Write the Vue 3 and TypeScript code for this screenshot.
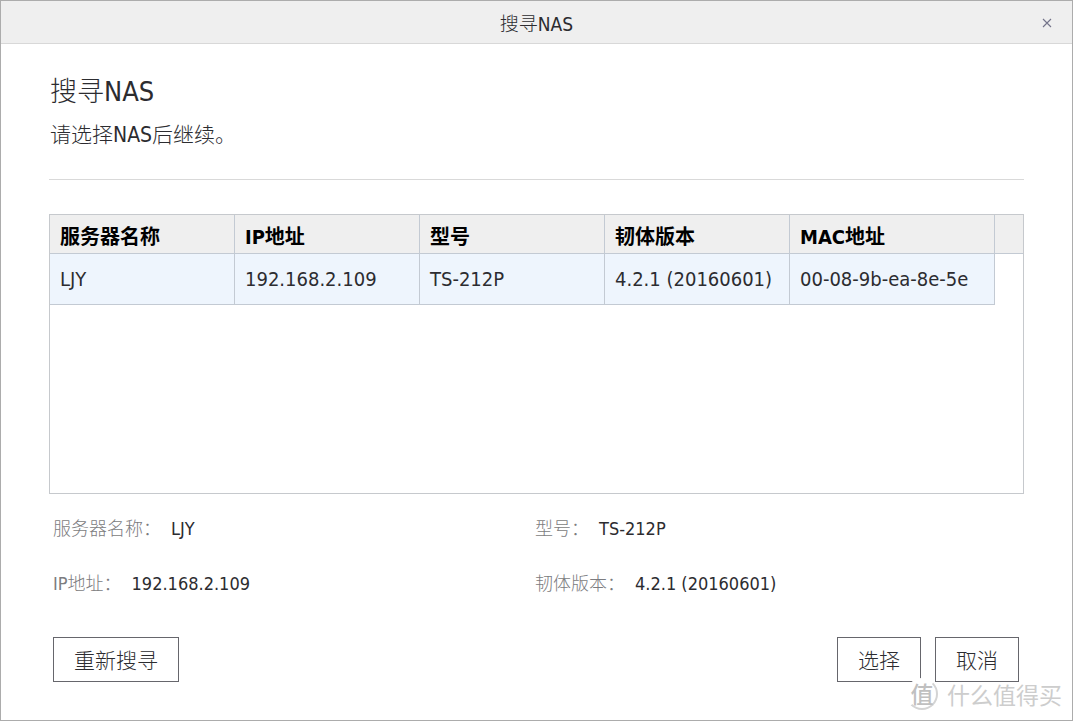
<script setup lang="ts">
import { ref } from 'vue'

interface NasServer {
  name: string
  ip: string
  model: string
  firmware: string
  mac: string
}

const columns: string[] = ['服务器名称', 'IP地址', '型号', '韧体版本', 'MAC地址']
const servers: NasServer[] = [
  { name: 'LJY', ip: '192.168.2.109', model: 'TS-212P', firmware: '4.2.1 (20160601)', mac: '00-08-9b-ea-8e-5e' },
]
const selected = ref<NasServer>(servers[0])
</script>

<template>
  <main class="dialog">
    <header class="titlebar">
      <span class="titlebar-text">搜寻NAS</span>
      <button class="close" type="button" aria-label="关闭">
        <svg viewBox="0 0 10 10" width="10" height="10" aria-hidden="true">
          <path d="M1 1L9 9M9 1L1 9" fill="none" stroke="#74748a" stroke-width="1.1" />
        </svg>
      </button>
    </header>

    <div class="content">
      <section class="intro">
        <h1>搜寻NAS</h1>
        <p>请选择NAS后继续。</p>
      </section>

      <div class="list">
        <table>
          <colgroup>
            <col v-for="i in 4" :key="i" class="col" />
            <col class="col-mac" />
            <col />
          </colgroup>
          <thead>
            <tr>
              <th v-for="c in columns" :key="c" scope="col">{{ c }}</th>
              <td class="filler"></td>
            </tr>
          </thead>
          <tbody>
            <tr v-for="s in servers" :key="s.mac" @click="selected = s">
              <td>{{ s.name }}</td>
              <td>{{ s.ip }}</td>
              <td>{{ s.model }}</td>
              <td>{{ s.firmware }}</td>
              <td>{{ s.mac }}</td>
              <td class="blank"></td>
            </tr>
          </tbody>
        </table>
      </div>

      <dl class="details">
        <div><dt>服务器名称：</dt><dd>{{ selected.name }}</dd></div>
        <div><dt>型号：</dt><dd>{{ selected.model }}</dd></div>
        <div><dt>IP地址：</dt><dd>{{ selected.ip }}</dd></div>
        <div><dt>韧体版本：</dt><dd>{{ selected.firmware }}</dd></div>
      </dl>

      <footer class="actions">
        <button class="btn rescan" type="button">重新搜寻</button>
        <button class="btn" type="button">选择</button>
        <button class="btn" type="button">取消</button>
      </footer>
    </div>

    <div class="watermark">
      <span class="seal">值</span>
      <span>什么值得买</span>
    </div>
  </main>
</template>

<style>
body {
  margin: 0;
}
</style>

<style scoped>
.dialog {
  position: relative;
  box-sizing: border-box;
  min-height: 100vh;
  display: flex;
  flex-direction: column;
  border: 1px solid #acacac;
  background: #fff;
  color: #2c2c30;
  font-family: "DejaVu Sans Condensed", "Noto Sans", "Noto Sans CJK SC", sans-serif;
  font-size: 20px;
  font-weight: 300;
}

.titlebar {
  display: grid;
  grid-template-columns: 50px 1fr 50px;
  align-items: center;
  height: 42px;
  border-bottom: 1px solid #d8d8d8;
  background: #efefef;
  font-size: 19px;
}

.titlebar-text {
  grid-column: 2;
  padding-bottom: 2px;
  text-align: center;
}

.close {
  display: flex;
  align-items: center;
  justify-content: center;
  height: 44px;
  padding: 0;
  border: 0;
  background: none;
}

.content {
  flex: 1;
  display: flex;
  flex-direction: column;
  padding: 30px 48px 38px;
}

.intro {
  padding: 0 1px 29px;
  margin-bottom: 34px;
  border-bottom: 1px solid #d9d9d9;
}

h1 {
  margin: 0 0 10px;
  font-size: 27px;
  line-height: 36px;
  font-weight: 300;
}

p {
  margin: 0;
  font-size: 21px;
  line-height: 30px;
}

.list {
  flex: 1;
  border: 1px solid #c6c9cd;
}

table {
  width: 100%;
  table-layout: fixed;
  border-collapse: separate;
  border-spacing: 0;
}

.col {
  width: 185px;
}

.col-mac {
  width: 205px;
}

th,
td {
  box-sizing: border-box;
  height: 51px;
  padding: 0 10px;
  border-right: 1px solid #c3cad3;
  border-bottom: 1px solid #c3cad3;
  background: #eef5fd;
  text-align: left;
  white-space: nowrap;
}

th,
.filler {
  height: 39px;
  padding-top: 5px;
  background: #efefef;
  color: #000;
  line-height: 28px;
  font-weight: 700;
}

.filler {
  border-right: 0;
}

.blank {
  border: 0;
  background: none;
}

.details {
  display: grid;
  grid-template-columns: 1fr 1fr;
  row-gap: 30px;
  margin: 22px 7px 41px 4px;
  font-size: 18px;
  line-height: 25px;
}

.details div {
  display: flex;
  gap: 10px;
}

dt {
  color: #7c7c80;
}

dd {
  margin: 0;
}

.actions {
  display: flex;
  gap: 14px;
  margin: 0 5px 0 4px;
}

.btn {
  width: 84px;
  height: 45px;
  padding: 0 0 2px;
  border: 1px solid #66666c;
  background: #fff;
  color: #2c2c30;
  font: inherit;
  font-size: 21px;
}

.rescan {
  width: 126px;
  margin-right: auto;
}

.watermark {
  position: absolute;
  right: 10px;
  bottom: 10px;
  display: flex;
  align-items: center;
  gap: 9px;
  color: #cdcdcd;
  font-family: "Noto Sans CJK SC", sans-serif;
  font-size: 23px;
  font-weight: 400;
  line-height: 32px;
  pointer-events: none;
}

.seal {
  box-sizing: border-box;
  width: 32px;
  height: 32px;
  border: 2px solid #fff;
  border-right-color: #d4d4d4;
  border-bottom-color: #d4d4d4;
  border-radius: 50%;
  background: #fff;
  color: #c0c0c0;
  line-height: 26px;
  font-weight: 500;
  text-align: center;
}
</style>
